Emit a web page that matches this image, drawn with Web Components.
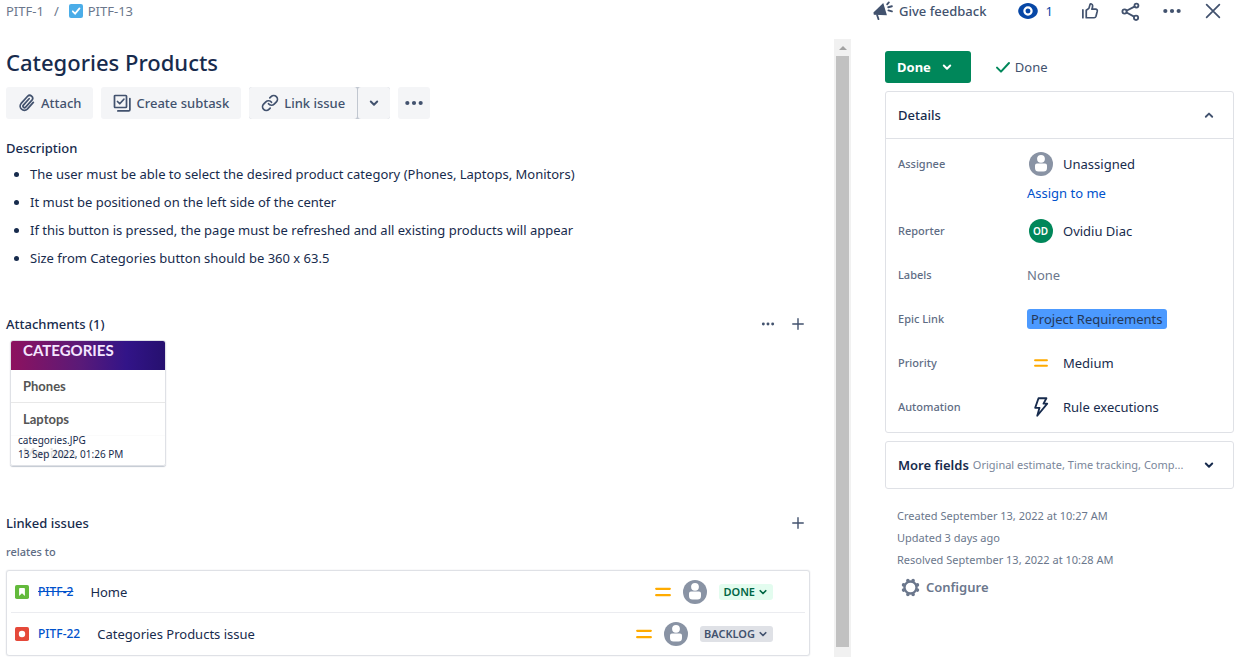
<!DOCTYPE html>
<html lang="en">
<head>
<meta charset="utf-8">
<meta name="viewport" content="width=device-width, initial-scale=1">
<title>PITF-13 Categories Products</title>
<style>
  body { margin: 0; background: #fff; color: #172b4d; font: 13px/20px "Noto Sans", "Open Sans", sans-serif; }
</style>
</head>
<body>
<issue-view></issue-view>

<script>
const BASE = `
  *, *::before, *::after { box-sizing: border-box; }
  :host { display: block; }
  :host([hidden]) { display: none; }
  button { font: inherit; color: inherit; margin: 0; padding: 0; border: 0; background: none; cursor: pointer; }
  a { color: inherit; text-decoration: none; }
  h1, h2, ul, p, dl, dd { margin: 0; padding: 0; font: inherit; }
`;

function define(tag, css, html) {
  const template = document.createElement('template');
  template.innerHTML = `<style>${BASE}${css}</style>${html}`;
  customElements.define(tag, class extends HTMLElement {
    constructor() {
      super();
      this.attachShadow({ mode: 'open' }).append(template.content.cloneNode(true));
    }
  });
}

const line = (w, body) => `<g fill="none" stroke="currentColor" stroke-width="${w}" stroke-linecap="round" stroke-linejoin="round">${body}</g>`;
const ICONS = {
  attach: line(2.3, '<path d="M20.4 11.2l-8 9a5.6 5.6 0 0 1-8.2-7.6l8.6-9.6a3.9 3.9 0 0 1 5.8 5.2l-8.4 9.3a2 2 0 0 1-3-2.7l7.6-8.5"/>'),
  subtask: line(2.3, '<rect x="2" y="2" width="16" height="16" rx="1"/><path d="M6 10l3 3 5.500-6"/><path d="M22.500 6v15a1.500 1.500 0 0 1-1.500 1.500H6.500"/>'),
  link: line(2.3, '<path d="M10 13a5 5 0 0 0 7.540.540l3-3a5 5 0 0 0-7.070-7.070l-1.720 1.710"/><path d="M14 11a5 5 0 0 0-7.540-.540l-3 3a5 5 0 0 0 7.070 7.070l1.710-1.710"/>'),
  down: line(3.4, '<path d="M6.500 9.500l5.500 5.500 5.500-5.500"/>'),
  up: line(3.2, '<path d="M6.500 15l5.500-5.500 5.500 5.500"/>'),
  more: '<g fill="currentColor"><circle cx="4" cy="12" r="2.500"/><circle cx="12" cy="12" r="2.500"/><circle cx="20" cy="12" r="2.500"/></g>',
  plus: line(2.4, '<path d="M12 3v18M3 12h18"/>'),
  close: line(2.3, '<path d="M3.500 3.500l17 17M20.500 3.500l-17 17"/>'),
  check: line(3, '<path d="M3 13l6 6L21 6"/>'),
  task: '<rect width="24" height="24" rx="3.500" fill="#4bade8"/><path d="M6.500 12.500l4 4 7.500-9" fill="none" stroke="#fff" stroke-width="3" stroke-linecap="round"/>',
  story: '<rect width="24" height="24" rx="3" fill="#63ba3c"/><path d="M7 6.500A1.500 1.500 0 0 1 8.500 5h7A1.500 1.500 0 0 1 17 6.500V19l-5-5-5 5z" fill="#fff"/>',
  bug: '<rect width="24" height="24" rx="3" fill="#e5493a"/><circle cx="12" cy="12" r="5.500" fill="#fff"/>',
  medium: '<g fill="none" stroke="#ffab00" stroke-width="3.400" stroke-linecap="round"><path d="M1.800 7.300h20.400M1.800 16.700h20.400"/></g>',
  person: '<circle cx="12" cy="12" r="12" fill="#8993a4"/><circle cx="12" cy="6.800" r="3.900" fill="#fff"/><path d="M6 13.500A2 2 0 0 1 8 11.500h8a2 2 0 0 1 2 2V16a3.500 3.500 0 0 1-3.500 3.500h-5A3.500 3.500 0 0 1 6 16z" fill="#fff"/>',
  eye: '<path d="M12 4C7 4 2.200 7.800 2.200 12S7 20 12 20s9.800-3.800 9.800-8S17 4 12 4z" fill="#0747a6"/><circle cx="12" cy="12" r="3.600" fill="none" stroke="#fff" stroke-width="2.200"/>',
  thumb: line(2.3, '<path d="M2.500 10.500V21"/><path d="M7 21V11l3.500-2.500L12 3.500c.5-1.500 3.500-1.200 3.500 1.500 0 1.700-.5 3.500-1 4.500h5c1.700 0 2.500 1.200 2.200 2.700L20 19c-.4 1.300-1 2-2.500 2z"/>'),
  share: line(2.3, '<circle cx="4.500" cy="12" r="2.700"/><circle cx="19.500" cy="4.500" r="2.500"/><circle cx="19" cy="20" r="2.700"/><path d="M7 11l10-5.200M7 13.300l9.500 5.200"/>'),
  megaphone: '<path d="M.500 13.800L12.300 2.500l4.400 14.500-15.700-.5z" fill="currentColor"/>' + line(2.2, '<path d="M5 17l1.600 4.800M17 4l2-2.300M18.300 7.500l4.400-1.200M18.500 11.300l4.200 1.200"/>'),
  bolt: line(2.2, '<path d="M9 1.500h9.500L15 8h4.500L7.500 22.500 10.200 13H5z"/>'),
  gear: '<g fill="none" stroke="currentColor"><circle cx="12" cy="12" r="7.600" stroke-width="3"/><g stroke-width="4.500" stroke-linecap="round"><path d="M8.700 3.300v.2M15.300 3.300v.2M8.700 20.700v-.2M15.300 20.700v-.2M3.200 8.700h.2M3.200 15.300h.2M20.800 8.700h-.2M20.800 15.300h-.2"/></g></g>',
};

/* <ui-icon name size>: a square inline icon that takes the text colour */
customElements.define('ui-icon', class extends HTMLElement {
  constructor() { super(); this.attachShadow({ mode: 'open' }); }
  connectedCallback() {
    const size = this.getAttribute('size') || 16;
    this.shadowRoot.innerHTML = `<style>:host{display:inline-flex;flex:none}svg{display:block}</style>
      <svg width="${size}" height="${size}" viewBox="0 0 24 24" aria-hidden="true">${ICONS[this.getAttribute('name')]}</svg>`;
  }
});

define('issue-breadcrumbs', `
  :host { color: #6b778c; }
  nav { display: flex; align-items: center; }
  .sep { padding: 0 10px; }
  a { display: flex; align-items: center; gap: 5px; }
`, `<nav aria-label="Breadcrumbs"><a href="#PITF-1">PITF-1</a><span class="sep">/</span><a href="#PITF-13"><ui-icon name="task" size="14"></ui-icon>PITF-13</a></nav>`);

define('issue-tools', `
  div { display: flex; align-items: center; justify-content: space-between; color: #42526e; font-weight: 500; padding-right: 12px; }
  button { display: flex; align-items: center; gap: 6px; height: 22px; }
  .tools { display: flex; padding: 0; gap: 22px; }
  .watch { color: #0747a6; margin-right: 6px; font-weight: 400; }
  .feedback { margin-left: -12px; }
`, `<div><button class="feedback"><ui-icon name="megaphone" size="20"></ui-icon>Give feedback</button>
  <div class="tools"><button class="watch"><ui-icon name="eye" size="24"></ui-icon>1</button>
  <button aria-label="Vote"><ui-icon name="thumb" size="18"></ui-icon></button>
  <button aria-label="Share"><ui-icon name="share" size="19"></ui-icon></button>
  <button aria-label="Actions"><ui-icon name="more" size="20"></ui-icon></button>
  <button aria-label="Close"><ui-icon name="close" size="18"></ui-icon></button></div></div>`);

define('tool-button', `
  :host { display: flex; }
  button { display: flex; align-items: center; justify-content: center; gap: 5px; min-width: 32px; height: 32px; padding: 0 var(--pad, 12px); border-radius: 3px; background: #f4f5f7; color: #42526e; font-weight: 500; }
`, `<button><slot name="icon"></slot><slot></slot></button>`);

define('issue-actions', `
  :host, .split { display: flex; }
  :host { gap: 8px; }
  .split { gap: 1px; background: #c1c7d0; border-radius: 3px; }
  .bare { --pad: 0; }
`, `<tool-button><ui-icon slot="icon" name="attach" size="18"></ui-icon>Attach</tool-button>
  <tool-button><ui-icon slot="icon" name="subtask" size="18"></ui-icon>Create subtask</tool-button>
  <div class="split"><tool-button><ui-icon slot="icon" name="link" size="18"></ui-icon>Link issue</tool-button>
  <tool-button class="bare"><ui-icon slot="icon" name="down" size="14"></ui-icon></tool-button></div>
  <tool-button class="bare"><ui-icon slot="icon" name="more" size="20"></ui-icon></tool-button>`);

define('issue-section', `
  header { display: flex; align-items: center; justify-content: space-between; height: 20px; }
  h2 { font-size: 13px; font-weight: 500; }
  .controls { display: flex; gap: 16px; color: #42526e; padding-right: 5px; }
`, `<section><header><h2><slot name="title"></slot></h2><div class="controls"><slot name="controls"></slot></div></header><slot></slot></section>`);

define('icon-button', `:host, button { display: flex; }`, `<button><slot></slot></button>`);

define('issue-description', `
  ul { padding: 6px 0 0 24px; list-style: disc; }
  li { margin-bottom: 8px; }
`, `<ul><li>The user must be able to select the desired product category (Phones, Laptops, Monitors)</li>
  <li>It must be positioned on the left side of the center</li>
  <li>If this button is pressed, the page must be refreshed and all existing products will appear</li>
  <li>Size from Categories button should be 360 x 63.5</li></ul>`);

define('attachment-card', `
  :host { width: 156px; height: 126px; margin: 6px 0 0 4px; position: relative; overflow: hidden; border: 1px solid #dfe1e6; border-radius: 3px; box-shadow: 0 1px 1px #091e4240; }
  .preview { font: 700 13px/32px Lato, sans-serif; color: #555; }
  .preview div { padding-left: 12px; height: 33px; border-bottom: 1px solid #e8e8e8; }
  .preview .head { height: 29px; line-height: 18px; font-size: 15px; color: #f4e6ff; border: 0; background: linear-gradient(90deg, #8d125f, #5a1a78 45%, #321488 75%, #26106f); }
  .preview .last { line-height: 34px; }
  .caption { position: absolute; left: 0; right: 0; bottom: 0; padding: 4px 7px; background: #ffffffd0; font-size: 10px; line-height: 14px; height: 36px; }
`, `<div class="preview"><div class="head">CATEGORIES</div><div>Phones</div><div>Laptops</div><div class="last">Monitors</div></div>
  <div class="caption"><div>categories.JPG</div><div>13 Sep 2022, 01:26 PM</div></div>`);

define('status-lozenge', `
  :host { --bg: #dfe1e6; --fg: #42526e; }
  :host([done]) { --bg: #e3fcef; --fg: #006644; }
  button { display: flex; align-items: center; gap: 2px; height: 16px; padding: 0 4px; border-radius: 3px; background: var(--bg); color: var(--fg); font-size: 11px; font-weight: 600; line-height: 16px; }
`, `<button><slot></slot><ui-icon name="down" size="12"></ui-icon></button>`);

define('linked-issue', `
  :host { padding: 0 4px; }
  .row { display: flex; align-items: center; height: 42px; padding: 0 32px 0 4px; border-bottom: 1px solid var(--rule, #ebecf0); }
  a { color: #0052cc; font-size: 12px; font-weight: 500; margin: 0 17px 0 9px; }
  :host([resolved]) a { text-decoration: line-through; }
  .name { flex: 1; }
  .side { display: flex; align-items: center; gap: 12px; }
`, `<div class="row"><slot name="type"></slot><a href="#issue"><slot name="key"></slot></a><span class="name"><slot></slot></span>
  <span class="side"><ui-icon name="medium" size="16"></ui-icon><ui-icon name="person" size="24"></ui-icon><slot name="status"></slot></span></div>`);

define('linked-issues', `
  p { margin-top: 9px; color: #5e6c84; font-size: 11px; font-weight: 500; }
  .list { margin-top: 8px; border: 1px solid #dfe1e6; border-radius: 3px; box-shadow: 0 0 1px #091e4240; }
  linked-issue:last-child { --rule: transparent; }
`, `<p>relates to</p><div class="list">
  <linked-issue resolved><ui-icon slot="type" name="story" size="14"></ui-icon><span slot="key">PITF-2</span>Home<status-lozenge slot="status" done>DONE</status-lozenge></linked-issue>
  <linked-issue><ui-icon slot="type" name="bug" size="14"></ui-icon><span slot="key">PITF-22</span>Categories Products issue<status-lozenge slot="status">BACKLOG</status-lozenge></linked-issue></div>`);

define('scroll-track', `
  :host { display: flex; flex-direction: column; width: 17px; flex: none; background: #f1f1f1; padding-bottom: 10px; }
  .cap { display: grid; place-items: center; height: 17px; }
  .cap::before { content: ""; border: 4px solid transparent; border-top: 0; border-bottom-color: #a3a3a3; }
  .thumb { flex: 1; margin: 0 2px; background: #c1c1c1; }
`, `<div class="cap"></div><div class="thumb"></div>`);

define('issue-content', `
  :host { flex: 1; min-width: 0; padding: 7px 24px 0 6px; }
  h1 { font-size: 22px; line-height: 32px; font-weight: 500; margin-bottom: 9px; }
  .description { margin-top: 19px; }
  .attachments { margin-top: 46px; }
  .linked { margin-top: 47px; }
`, `<h1>Categories Products</h1><issue-actions></issue-actions>
  <issue-section class="description"><span slot="title">Description</span><issue-description></issue-description></issue-section>
  <issue-section class="attachments"><span slot="title">Attachments (1)</span>
    <icon-button slot="controls"><ui-icon name="more" size="14"></ui-icon></icon-button>
    <icon-button slot="controls"><ui-icon name="plus" size="14"></ui-icon></icon-button>
    <attachment-card></attachment-card></issue-section>
  <issue-section class="linked"><span slot="title">Linked issues</span>
    <icon-button slot="controls"><ui-icon name="plus" size="14"></ui-icon></icon-button>
    <linked-issues></linked-issues></issue-section>`);

define('issue-status', `
  :host { display: flex; align-items: center; gap: 24px; }
  button { display: flex; align-items: center; gap: 9px; height: 32px; padding: 0 17px 0 12px; border-radius: 3px; background: #00875a; color: #fff; font-weight: 700; }
  span { display: flex; align-items: center; gap: 4px; color: #42526e; }
  span ui-icon { color: #00875a; }
`, `<button>Done<ui-icon name="down" size="14"></ui-icon></button><span><ui-icon name="check" size="16"></ui-icon>Done</span>`);

define('field-row', `
  :host { display: grid; grid-template-columns: 129px minmax(0, 1fr); min-height: 44px; align-items: start; line-height: 24px; }
  .label { color: #5e6c84; font-size: 11px; font-weight: 500; }
`, `<span class="label"><slot name="label"></slot></span><div><slot></slot></div>`);

define('field-value', `
  :host { display: flex; align-items: center; gap: 10px; }
  .icon { display: grid; place-items: center; width: 26px; height: 24px; padding-left: 1px; }
`, `<span class="icon"><slot name="icon"></slot></span><slot></slot>`);

define('user-initials', `
  :host { display: grid; place-items: center; width: 24px; height: 24px; border-radius: 50%; background: #00875a; color: #fff; font-size: 10px; font-weight: 600; line-height: 24px; }
`, `<slot></slot>`);

define('details-panel', `
  :host { border: 1px solid #dfe1e6; border-radius: 3px; }
  .head { display: flex; align-items: center; justify-content: space-between; width: 100%; height: 47px; padding: 0 17px 0 12px; border-bottom: 1px solid #dfe1e6; font-weight: 500; }
  .head ui-icon { color: #42526e; }
  .fields { padding: 13px 12px 0; }
  .fields field-row:last-child { min-height: 37px; }
  .assign { display: block; color: #0052cc; padding: 5px 0 14px; }
  .muted { color: #6b778c; }
  .epic { display: inline-block; padding: 0 4px; border-radius: 3px; background: #4c9aff; color: #253858; line-height: 20px; }
`, `<button class="head" aria-expanded="true">Details<ui-icon name="up" size="14"></ui-icon></button>
  <div class="fields">
    <field-row><span slot="label">Assignee</span><field-value><ui-icon slot="icon" name="person" size="24"></ui-icon>Unassigned</field-value><a class="assign" href="#assign">Assign to me</a></field-row>
    <field-row><span slot="label">Reporter</span><field-value><user-initials slot="icon">OD</user-initials>Ovidiu Diac</field-value></field-row>
    <field-row><span slot="label">Labels</span><span class="muted">None</span></field-row>
    <field-row><span slot="label">Epic Link</span><a class="epic" href="#epic">Project Requirements</a></field-row>
    <field-row><span slot="label">Priority</span><field-value><ui-icon slot="icon" name="medium" size="14"></ui-icon>Medium</field-value></field-row>
    <field-row><span slot="label">Automation</span><field-value><ui-icon slot="icon" name="bolt" size="20"></ui-icon>Rule executions</field-value></field-row>
  </div>`);

define('more-fields', `
  button { display: flex; align-items: center; gap: 4px; width: 100%; height: 48px; padding: 0 17px 0 12px; border: 1px solid #dfe1e6; border-radius: 3px; font-weight: 600; text-align: left; }
  .hint { flex: 1; color: #7a869a; font-size: 11px; font-weight: 400; }
`, `<button aria-expanded="false">More fields<span class="hint">Original estimate, Time tracking, Comp...</span><ui-icon name="down" size="14"></ui-icon></button>`);

define('issue-footer', `
  :host { padding-left: 12px; color: #6b778c; font-size: 11px; line-height: 22px; }
  button { display: flex; align-items: center; gap: 6px; height: 32px; padding-left: 4px; font-size: 13px; font-weight: 600; }
`, `<p>Created September 13, 2022 at 10:27 AM</p><p>Updated 3 days ago</p><p>Resolved September 13, 2022 at 10:28 AM</p>
  <button><ui-icon name="gear" size="19"></ui-icon>Configure</button>`);

define('issue-view', `
  :host { display: grid; grid-template-columns: minmax(0, 1fr) 349px; column-gap: 34px; padding-right: 6px; min-height: 100vh; }
  .main, .aside { display: flex; flex-direction: column; min-width: 0; }
  .main > header { height: 39px; padding: 1px 0 0 6px; }
  .body { display: flex; flex: 1; }
  .aside issue-tools { height: 51px; }
  details-panel, more-fields { margin-top: 8px; }
  issue-footer { margin-top: 16px; }
`, `<div class="main"><header><issue-breadcrumbs></issue-breadcrumbs></header><div class="body"><issue-content></issue-content><scroll-track></scroll-track></div></div>
  <aside class="aside"><issue-tools></issue-tools><issue-status></issue-status><details-panel></details-panel><more-fields></more-fields><issue-footer></issue-footer></aside>`);
</script>
</body>
</html>
